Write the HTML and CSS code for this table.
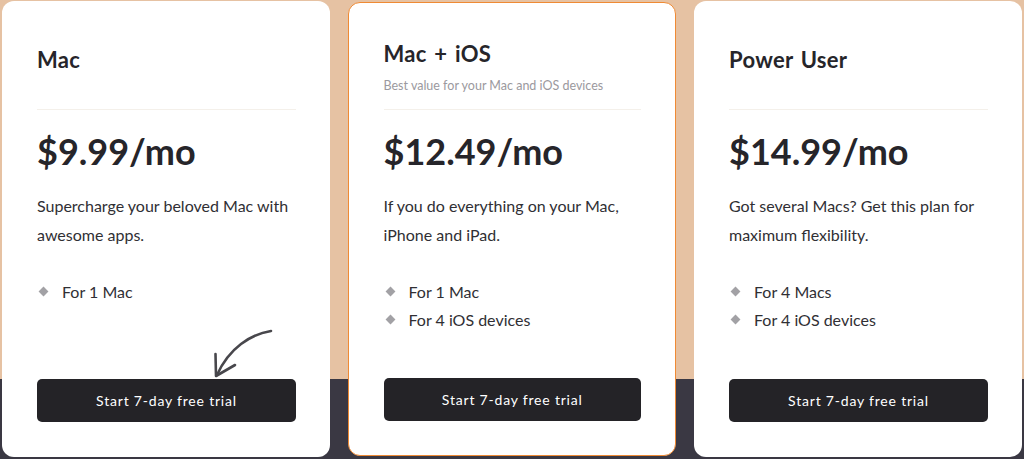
FILE: index.html
```html
<!DOCTYPE html>
<html lang="en">
<head>
<meta charset="utf-8">
<title>Pricing</title>
<link rel="stylesheet" href="styles.css">
</head>
<body>
<main class="plans">
  <section class="card">
    <header class="card-head">
      <h2 class="plan-name">Mac</h2>
    </header>
    <div class="price">$9.99/mo</div>
    <p class="desc">Supercharge your beloved Mac with awesome apps.</p>
    <ul class="features">
      <li>For 1 Mac</li>
    </ul>
    <svg class="arrow" width="70" height="56" viewBox="0 0 70 56" aria-hidden="true">
      <path d="M66 3 C 46 6, 24 20, 12 47" fill="none" stroke="#48474c" stroke-width="2.6" stroke-linecap="round"/>
      <path d="M10.5 26 L 11 48 L 30 37" fill="none" stroke="#48474c" stroke-width="2.6" stroke-linecap="round" stroke-linejoin="round"/>
    </svg>
    <button class="cta">Start 7-day free trial</button>
  </section>
  <section class="card card-featured">
    <header class="card-head card-head-sub">
      <h2 class="plan-name">Mac + iOS</h2>
      <p class="plan-sub">Best value for your Mac and iOS devices</p>
    </header>
    <div class="price">$12.49/mo</div>
    <p class="desc">If you do everything on your Mac, iPhone and iPad.</p>
    <ul class="features">
      <li>For 1 Mac</li>
      <li>For 4 iOS devices</li>
    </ul>
    <button class="cta">Start 7-day free trial</button>
  </section>
  <section class="card">
    <header class="card-head">
      <h2 class="plan-name">Power User</h2>
    </header>
    <div class="price">$14.99/mo</div>
    <p class="desc">Got several Macs? Get this plan for maximum flexibility.</p>
    <ul class="features">
      <li>For 4 Macs</li>
      <li>For 4 iOS devices</li>
    </ul>
    <button class="cta">Start 7-day free trial</button>
  </section>
</main>
</body>
</html>
```

FILE: styles.css
```css
* { box-sizing: border-box; }

html, body {
  margin: 0;
  padding: 0;
}

body {
  width: 1024px;
  height: 459px;
  overflow: hidden;
  font-family: Lato, "Noto Sans", sans-serif;
  color: #26252a;
  background: linear-gradient(to bottom, #e6c2a3 0, #e6c2a3 379px, #3a3843 379px, #3a3843 100%);
}

.plans {
  display: flex;
  gap: 18px;
  padding: 1px 2px 2px 2px;
  height: 459px;
}

.card {
  position: relative;
  flex: 0 0 328px;
  background: #fff;
  border-radius: 12px;
  padding: 0 34px 35px 35px;
  display: flex;
  flex-direction: column;
}

.card-featured {
  border: 1.5px solid #ef8a34;
  padding: 0 34px 34px 34.5px;
  margin-top: 1px;
  margin-bottom: 1px;
}

.card-head {
  height: 109px;
  padding-top: 44px;
  border-bottom: 1px solid #f4f0ea;
}

.card-head-sub {
  height: 107px;
  padding-top: 36px;
}

.plan-name {
  margin: 0;
  font-size: 22px;
  font-weight: 700;
  line-height: 30px;
  letter-spacing: 0.3px;
  word-spacing: 2px;
  color: #26252a;
}

.plan-sub {
  margin: 10px 0 0;
  font-size: 12.5px;
  line-height: 14px;
  color: #9b999e;
}

.price {
  margin-top: 20px;
  font-size: 36px;
  font-weight: 700;
  line-height: 42px;
  color: #26252a;
}

.desc {
  margin: 19px 0 0;
  font-size: 16px;
  line-height: 29px;
  color: #302f34;
}

.features {
  list-style: none;
  margin: 29px 0 0;
  padding: 0;
}

.features li {
  display: flex;
  align-items: center;
  font-size: 16px;
  line-height: 27.5px;
  color: #302f34;
}

.features li::before {
  content: "";
  width: 7px;
  height: 7px;
  margin: 0 15px 0 3px;
  background: #a2a1a5;
  transform: rotate(45deg);
}

.arrow {
  position: absolute;
  left: 203px;
  top: 327px;
}

.cta {
  margin-top: auto;
  height: 43px;
  width: 100%;
  border: none;
  border-radius: 5px;
  background: #242327;
  color: #fff;
  font-family: Lato, "Noto Sans", sans-serif;
  font-size: 14px;
  letter-spacing: 0.8px;
  cursor: pointer;
}
```
